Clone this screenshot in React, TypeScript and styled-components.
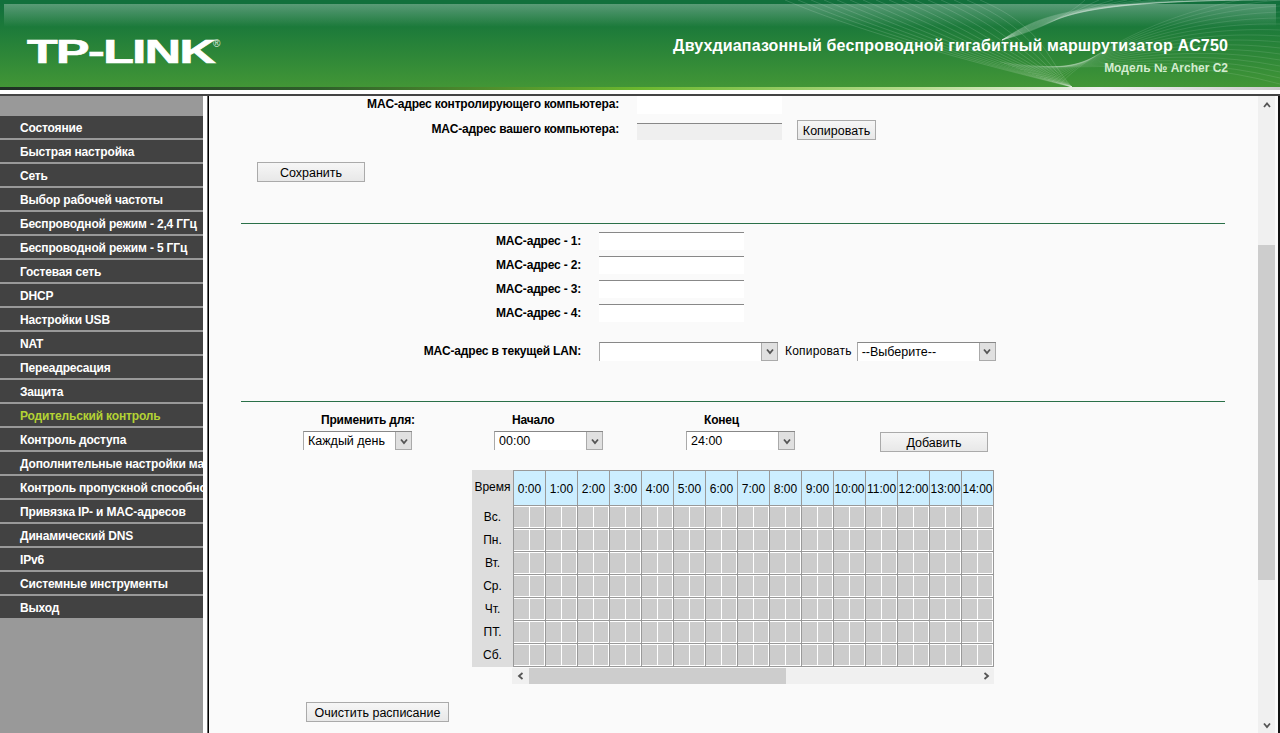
import React from 'react'
import styled, { createGlobalStyle } from 'styled-components'

const GlobalStyle = createGlobalStyle`
  html, body {
    margin: 0;
    padding: 0;
    height: 100%;
    overflow: hidden;
    background: #fff;
    font-family: "Liberation Sans", Arial, sans-serif;
    font-size: 12px;
    color: #000;
  }
`

const Page = styled.div`
  width: 1280px;
  height: 733px;
  display: flex;
  flex-direction: column;
  overflow: hidden;
`

const Banner = styled.header`
  position: relative;
  height: 87px;
  flex: none;
  display: flex;
  justify-content: space-between;
  padding: 0 52px 0 27px;
  overflow: hidden;
  background: linear-gradient(180deg, #12703c 0, #12703c 4px, #1c7a3a 27px, #429636 87px);
  &::before {
    content: '';
    position: absolute;
    left: 4px;
    top: 4px;
    width: 1272px;
    height: 23px;
    background: linear-gradient(180deg, rgba(255, 255, 255, 0.3), rgba(255, 255, 255, 0));
  }
`

const Waves = styled.svg`
  position: absolute;
  left: 0;
  top: 0;
`

const LogoSlot = styled.div`
  position: relative;
  width: 192px;
  padding-top: 34px;
`

const LogoText = styled.span`
  display: inline-block;
  font-size: 33px;
  line-height: 36px;
  font-weight: 700;
  color: #fff;
  letter-spacing: -1px;
  white-space: nowrap;
  -webkit-text-stroke: 0.7px #fff;
  transform: scaleX(1.52);
  transform-origin: left center;
`

const LogoMark = styled.span`
  position: absolute;
  left: 186px;
  top: 39px;
  font-size: 10px;
  line-height: 10px;
  color: #e2eee2;
`

const BannerTitles = styled.div`
  position: relative;
  display: flex;
  flex-direction: column;
  align-items: flex-end;
  padding-top: 36px;
`

const ProductName = styled.div`
  font-size: 16px;
  line-height: 20px;
  font-weight: 700;
  letter-spacing: 0.15px;
  color: #fff;
`

const ModelName = styled.div`
  margin-top: 4px;
  font-size: 12px;
  line-height: 16px;
  font-weight: 700;
  color: #d4ecd0;
`

const Strip = styled.div`
  height: 3px;
  flex: none;
  background: linear-gradient(90deg, #1f2f24 0, #2f5f2a 25%, #6cb82f 50%, #b8dd90 72%, #f0f0f0 86%, #ccc 100%);
`

const Body = styled.div`
  flex: 1;
  min-height: 0;
  display: flex;
  margin-top: 4px;
  border-top: 2px solid #444;
  background: #fff;
`

const Sidebar = styled.nav`
  width: 203px;
  flex: none;
  padding-top: 20px;
  background: #999;
  overflow: hidden;
`

const MenuItem = styled.div<{ $active?: boolean }>`
  height: 22px;
  margin-bottom: 2px;
  padding-left: 20px;
  background: #424242;
  color: ${(p) => (p.$active ? '#b4d334' : '#fff')};
  font-weight: 700;
  font-size: 12px;
  letter-spacing: -0.16px;
  line-height: 25px;
  white-space: nowrap;
  overflow: hidden;
`

const ContentFrame = styled.div`
  flex: 1;
  min-width: 0;
  display: flex;
  margin-left: 5px;
  border-left: 1px solid #000;
  border-right: 2px solid #111;
  box-shadow: -1px 0 0 #666;
`

const Content = styled.main`
  flex: 1;
  min-width: 0;
  background: #fafafa;
  overflow: hidden;
`

const FormRow = styled.div<{ $height: number; $top?: number }>`
  display: flex;
  align-items: center;
  height: ${(p) => p.$height}px;
  margin-top: ${(p) => p.$top ?? 0}px;
`

const FieldLabel = styled.label<{ $width: number; $raised?: boolean }>`
  width: ${(p) => p.$width}px;
  flex: none;
  margin-right: 18px;
  margin-bottom: ${(p) => (p.$raised ? 2 : 0)}px;
  text-align: right;
  font-weight: 700;
  font-size: 12px;
  letter-spacing: -0.18px;
  white-space: nowrap;
`

const TextField = styled.input<{ $cut?: boolean }>`
  box-sizing: border-box;
  width: 145px;
  height: 18px;
  padding: 0 4px;
  border: 0;
  border-top: ${(p) => (p.$cut ? '0' : '1px solid #888')};
  background: #fff;
  outline: none;
  &:read-only {
    align-self: flex-end;
    height: 17px;
    background: #efefef;
  }
`

const PushButton = styled.button<{ $width: number; $left: number; $top?: number }>`
  display: block;
  box-sizing: border-box;
  flex: none;
  width: ${(p) => p.$width}px;
  height: 20px;
  margin-left: ${(p) => p.$left}px;
  margin-top: ${(p) => p.$top ?? 0}px;
  padding: 1px 0 0;
  border: 1px solid #aaa;
  background: linear-gradient(180deg, #f6f6f6, #e8e8e8);
  color: #000;
  font-family: "Liberation Sans", Arial, sans-serif;
  font-size: 12.5px;
  line-height: 16px;
  white-space: nowrap;
`

const Rule = styled.hr<{ $top: number }>`
  width: 984px;
  height: 1px;
  margin: ${(p) => p.$top}px 0 0 32px;
  border: 0;
  background: #2a7048;
`

const SelectBox = styled.div<{ $width: number }>`
  box-sizing: border-box;
  display: flex;
  flex: none;
  width: ${(p) => p.$width}px;
  height: 19px;
  padding-left: 4px;
  border-top: 1px solid #888;
  border-left: 1px solid #aaa;
  background: #fff;
  font-size: 12.5px;
  line-height: 19px;
  white-space: nowrap;
`

const SelectArrow = styled.span`
  box-sizing: border-box;
  display: flex;
  flex: none;
  align-items: center;
  justify-content: center;
  width: 17px;
  height: 18px;
  margin-left: auto;
  border: 1px solid #aaa;
  border-top: 0;
  background: #e0e0e0;
`

const CopyLabel = styled.span`
  margin: 0 5px 0 7px;
  font-size: 12px;
  letter-spacing: 0.2px;
`

const PlanRow = styled.div`
  display: flex;
  margin: 10px 0 0 94px;
`

const PlanColumn = styled.div<{ $width: number }>`
  width: ${(p) => p.$width}px;
  flex: none;
`

const PlanLabel = styled.div`
  height: 19px;
  padding-left: 18px;
  font-weight: 700;
  font-size: 12px;
  letter-spacing: -0.18px;
  line-height: 16px;
  white-space: nowrap;
`

const ScheduleWrap = styled.div`
  display: flex;
  margin: 18px 0 0 263px;
`

const DayColumn = styled.div`
  width: 41px;
  flex: none;
  background: #ddd;
  text-align: center;
`

const TimeCaption = styled.div`
  height: 35px;
  line-height: 35px;
  font-size: 12px;
`

const DayCaption = styled.div`
  height: 23px;
  line-height: 25px;
  font-size: 12px;
`

const HourGrid = styled.div`
  display: grid;
  grid-template-columns: repeat(15, 32px);
  grid-template-rows: 35px repeat(7, 23px);
  border-right: 1px solid #999;
  border-bottom: 1px solid #999;
`

const HourHead = styled.div`
  box-sizing: border-box;
  border-top: 1px solid #999;
  border-left: 1px solid #999;
  background: #cef;
  text-align: center;
  font-size: 12px;
  line-height: 36px;
`

const HourSlot = styled.div`
  box-sizing: border-box;
  display: flex;
  gap: 1px;
  padding: 1px 1px 1px 0;
  border-top: 1px solid #999;
  border-left: 1px solid #999;
  background: #fff;
`

const HalfSlot = styled.span`
  flex: 1;
  background: #ccc;
`

const HScroll = styled.div`
  display: flex;
  align-items: center;
  width: 482px;
  height: 16px;
  margin: 1px 0 0 303px;
  background: #f0f0f0;
`

const HThumb = styled.div`
  width: 257px;
  height: 100%;
  background: #cdcdcd;
`

const HFill = styled.div`
  flex: 1;
`

const ArrowCell = styled.span<{ $size: number }>`
  display: flex;
  flex: none;
  align-items: center;
  justify-content: center;
  width: ${(p) => p.$size}px;
  height: 17px;
`

const VScroll = styled.div`
  width: 17px;
  flex: none;
  display: flex;
  flex-direction: column;
  background: #f0f0f0;
`

const VThumb = styled.div`
  height: 335px;
  flex: none;
  margin-top: 132px;
  background: #cdcdcd;
`

const VFill = styled.div`
  flex: 1;
`

const ScrollGutter = styled.div`
  width: 3px;
  flex: none;
  background: #fafafa;
`

const Chevron = ({ dir, size = 8, color = '#555' }: { dir: 'up' | 'down' | 'left' | 'right'; size?: number; color?: string }) => {
  const paths = {
    up: 'M1 6 L4 2.5 L7 6',
    down: 'M1 2.5 L4 6 L7 2.5',
    left: 'M5.5 1 L2 4 L5.5 7',
    right: 'M2.5 1 L6 4 L2.5 7',
  }
  return (
    <svg width={size} height={size} viewBox="0 0 8 8" fill="none">
      <path d={paths[dir]} stroke={color} strokeWidth="1.8" />
    </svg>
  )
}

const menu = [
  'Состояние',
  'Быстрая настройка',
  'Сеть',
  'Выбор рабочей частоты',
  'Беспроводной режим - 2,4 ГГц',
  'Беспроводной режим - 5 ГГц',
  'Гостевая сеть',
  'DHCP',
  'Настройки USB',
  'NAT',
  'Переадресация',
  'Защита',
  'Родительский контроль',
  'Контроль доступа',
  'Дополнительные настройки маршрутизации',
  'Контроль пропускной способности',
  'Привязка IP- и MAC-адресов',
  'Динамический DNS',
  'IPv6',
  'Системные инструменты',
  'Выход',
]

const hours = Array.from({ length: 15 }, (_, i) => `${i}:00`)
const days = ['Вс.', 'Пн.', 'Вт.', 'Ср.', 'Чт.', 'ПТ.', 'Сб.']
const lines = Array.from({ length: 16 }, (_, i) => i)

const Select = ({ width, value }: { width: number; value?: string }) => (
  <SelectBox $width={width}>
    {value ?? ''}
    <SelectArrow>
      <Chevron dir="down" />
    </SelectArrow>
  </SelectBox>
)

export default function App() {
  return (
    <Page>
      <GlobalStyle />
      <Banner>
        <Waves width="1280" height="87" viewBox="0 0 1280 87" fill="none">
          {lines.map((i) => (
            <path
              key={`a${i}`}
              d={`M${785 + i * 13} 0 C${850 + i * 13} 28 ${955 + i * 6} 58 1072 87`}
              stroke="#fff"
              strokeOpacity="0.2"
              strokeWidth="0.7"
            />
          ))}
          {lines.map((i) => (
            <path
              key={`b${i}`}
              d={`M${1000 + i * 4} ${62 + i * 1.5} C1080 ${76 - i} 1160 ${52 - i * 3} 1280 ${84 - i * 6}`}
              stroke="#fff"
              strokeOpacity="0.16"
              strokeWidth="0.7"
            />
          ))}
          {lines.map((i) => (
            <path
              key={`c${i}`}
              d={`M1002 40 C1040 ${30 - i} 1070 ${14 - i} ${1085 + i * 14} 0`}
              stroke="#fff"
              strokeOpacity="0.18"
              strokeWidth="0.7"
            />
          ))}
        </Waves>
        <LogoSlot>
          <LogoText>TP-LINK</LogoText>
          <LogoMark>®</LogoMark>
        </LogoSlot>
        <BannerTitles>
          <ProductName>Двухдиапазонный беспроводной гигабитный маршрутизатор AC750</ProductName>
          <ModelName>Модель № Archer C2</ModelName>
        </BannerTitles>
      </Banner>
      <Strip />
      <Body>
        <Sidebar>
          {menu.map((item) => (
            <MenuItem key={item} $active={item === 'Родительский контроль'}>
              {item}
            </MenuItem>
          ))}
        </Sidebar>
        <ContentFrame>
          <Content>
            <FormRow $height={18}>
              <FieldLabel $width={410} $raised>
                MAC-адрес контролирующего компьютера:
              </FieldLabel>
              <TextField $cut />
            </FormRow>
            <FormRow $height={20} $top={6}>
              <FieldLabel $width={410} $raised>
                MAC-адрес вашего компьютера:
              </FieldLabel>
              <TextField readOnly />
              <PushButton $width={79} $left={15}>
                Копировать
              </PushButton>
            </FormRow>
            <PushButton $width={108} $left={48} $top={22}>
              Сохранить
            </PushButton>
            <Rule $top={41} />
            {[1, 2, 3, 4].map((n) => (
              <FormRow key={n} $height={24} $top={n === 1 ? 5 : 0}>
                <FieldLabel $width={372}>MAC-адрес - {n}:</FieldLabel>
                <TextField />
              </FormRow>
            ))}
            <FormRow $height={24} $top={14}>
              <FieldLabel $width={372}>MAC-адрес в текущей LAN:</FieldLabel>
              <Select width={179} />
              <CopyLabel>Копировать</CopyLabel>
              <Select width={139} value="--Выберите--" />
            </FormRow>
            <Rule $top={38} />
            <PlanRow>
              <PlanColumn $width={191}>
                <PlanLabel>Применить для:</PlanLabel>
                <Select width={109} value="Каждый день" />
              </PlanColumn>
              <PlanColumn $width={192}>
                <PlanLabel>Начало</PlanLabel>
                <Select width={109} value="00:00" />
              </PlanColumn>
              <PlanColumn $width={194}>
                <PlanLabel>Конец</PlanLabel>
                <Select width={109} value="24:00" />
              </PlanColumn>
              <PushButton $width={108} $left={0} $top={20}>
                Добавить
              </PushButton>
            </PlanRow>
            <ScheduleWrap>
              <DayColumn>
                <TimeCaption>Время</TimeCaption>
                {days.map((d) => (
                  <DayCaption key={d}>{d}</DayCaption>
                ))}
              </DayColumn>
              <HourGrid>
                {hours.map((h) => (
                  <HourHead key={h}>{h}</HourHead>
                ))}
                {days.map((d) =>
                  hours.map((h) => (
                    <HourSlot key={d + h}>
                      <HalfSlot />
                      <HalfSlot />
                    </HourSlot>
                  )),
                )}
              </HourGrid>
            </ScheduleWrap>
            <HScroll>
              <ArrowCell $size={17}>
                <Chevron dir="left" />
              </ArrowCell>
              <HThumb />
              <HFill />
              <ArrowCell $size={17}>
                <Chevron dir="right" />
              </ArrowCell>
            </HScroll>
            <PushButton $width={143} $left={97} $top={18}>
              Очистить расписание
            </PushButton>
          </Content>
          <VScroll>
            <ArrowCell $size={17}>
              <Chevron dir="up" />
            </ArrowCell>
            <VThumb />
            <VFill />
            <ArrowCell $size={17}>
              <Chevron dir="down" />
            </ArrowCell>
          </VScroll>
          <ScrollGutter />
        </ContentFrame>
      </Body>
    </Page>
  )
}
